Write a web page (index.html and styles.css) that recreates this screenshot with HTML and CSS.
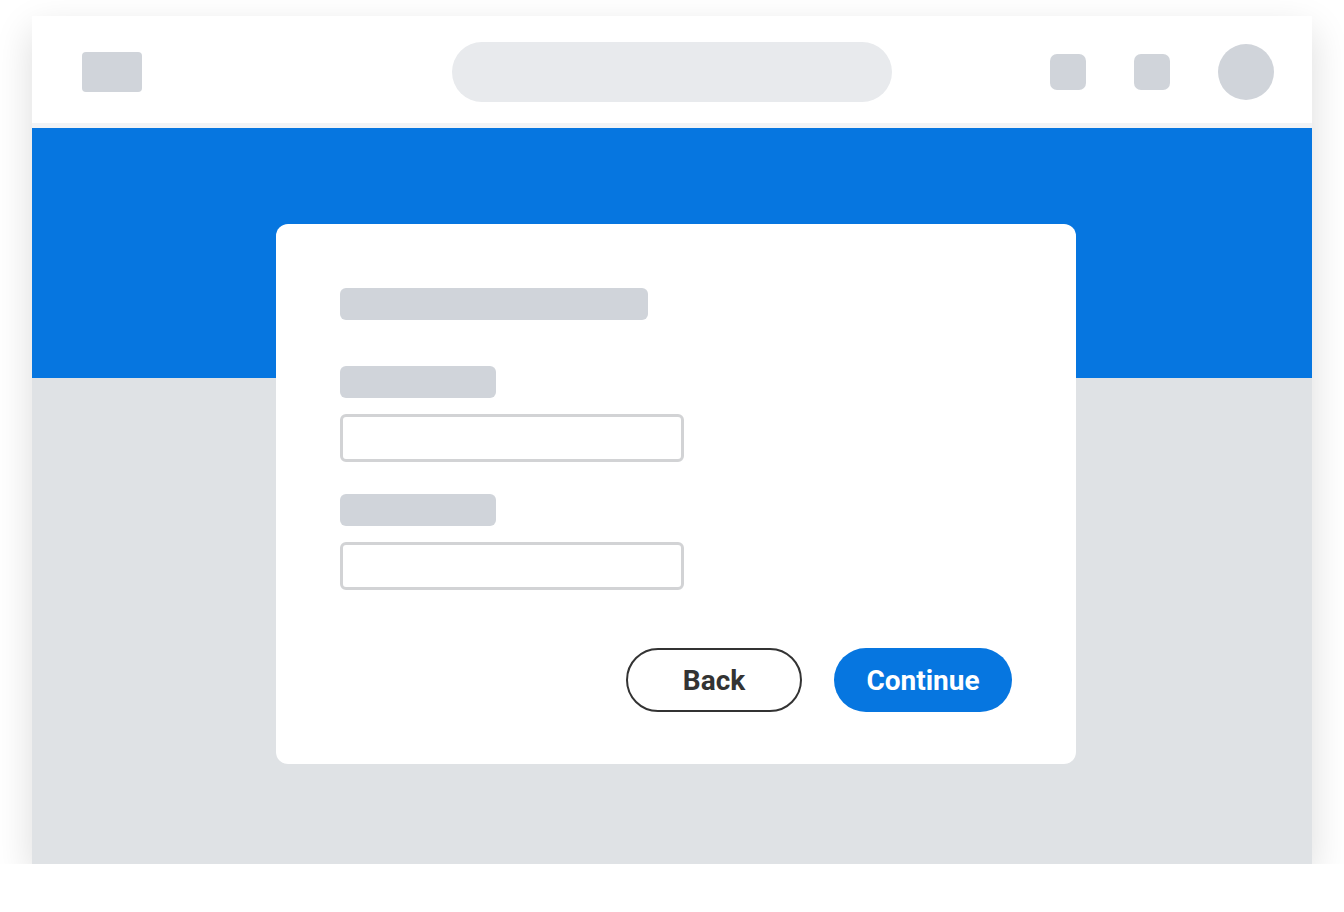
FILE: index.html
```html
<!DOCTYPE html>
<html lang="en">
<head>
    <meta charset="UTF-8">
    <meta name="viewport" content="width=device-width, initial-scale=1.0">
    <title>Form</title>
    <link rel="stylesheet" href="styles.css">
</head>
<body>

    <div class="window">
        <header class="topbar">
            <div class="logo"></div>
            <div class="search"></div>
            <div class="actions">
                <div class="icon"></div>
                <div class="icon"></div>
                <div class="avatar"></div>
            </div>
        </header>

        <main class="content">
            <div class="card">
                <div class="ph title"></div>

                <div class="field">
                    <div class="ph label"></div>
                    <input type="text" class="input">
                </div>

                <div class="field">
                    <div class="ph label"></div>
                    <input type="text" class="input">
                </div>

                <div class="buttons">
                    <button class="btn back">Back</button>
                    <button class="btn next">Continue</button>
                </div>
            </div>
        </main>
    </div>

</body>
</html>
```

FILE: styles.css
```css
body {
    margin: 0;
    padding: 16px 32px 0;
    background-color: #fff;
    font-family: Roboto, "Liberation Sans", sans-serif;
}
.window {
    display: flex;
    flex-direction: column;
    height: 848px;
    background-color: #dfe2e5;
    box-shadow: 0 14px 36px rgba(0, 0, 0, 0.14);
}
.topbar {
    display: flex;
    align-items: center;
    box-sizing: border-box;
    height: 112px;
    padding: 5px 38px 0 50px;
    background-color: #fff;
    border-bottom: 5px solid #f2f3f5;
}
.logo {
    width: 60px;
    height: 40px;
    border-radius: 4px;
    background-color: #d0d4da;
}
.search {
    width: 440px;
    height: 60px;
    margin-left: 310px;
    border-radius: 30px;
    background-color: #e8eaed;
}
.actions {
    display: flex;
    align-items: center;
    margin-left: auto;
}
.icon {
    width: 36px;
    height: 36px;
    margin-right: 48px;
    border-radius: 7px;
    background-color: #d0d4da;
}
.avatar {
    width: 56px;
    height: 56px;
    border-radius: 50%;
    background-color: #d0d4da;
}
.content {
    flex: 1;
    display: flex;
    justify-content: center;
    align-items: flex-start;
    padding: 96px 0 0 8px;
    background: linear-gradient(#0676e0 250px, #dfe2e5 250px);
}
.card {
    box-sizing: border-box;
    width: 800px;
    height: 540px;
    padding: 64px;
    border-radius: 12px;
    background-color: #fff;
}
.ph {
    height: 32px;
    border-radius: 6px;
    background-color: #d0d4da;
}
.title {
    width: 308px;
    margin-bottom: 46px;
}
.field {
    margin-bottom: 32px;
}
.label {
    width: 156px;
    margin-bottom: 16px;
}
.input {
    display: block;
    box-sizing: border-box;
    width: 344px;
    height: 48px;
    margin: 0;
    border: 3px solid #d2d3d5;
    border-radius: 6px;
    background-color: #fff;
}
.buttons {
    display: flex;
    justify-content: flex-end;
    gap: 32px;
    margin-top: 58px;
}
.btn {
    box-sizing: border-box;
    height: 64px;
    padding: 0;
    border-radius: 32px;
    font-family: Roboto, "Liberation Sans", sans-serif;
    font-size: 28px;
    font-weight: 700;
    cursor: pointer;
}
.back {
    width: 176px;
    border: 2px solid #333;
    background-color: #fff;
    color: #333;
}
.next {
    width: 178px;
    border: none;
    background-color: #0676e0;
    color: #fff;
}
```
